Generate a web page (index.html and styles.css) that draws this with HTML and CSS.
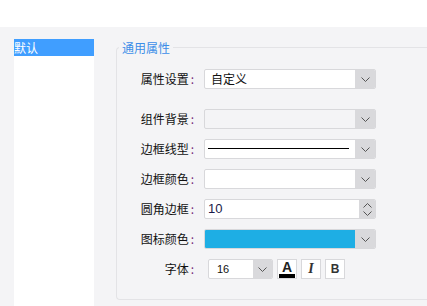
FILE: index.html
```html
<!DOCTYPE html>
<html lang="zh-CN">
<head>
  <meta charset="UTF-8">
  <title>通用属性</title>
  <link rel="stylesheet" href="styles.css">
</head>
<body>
  <div class="top"></div>
  <div class="main">
    <ul class="list">
      <li class="item active">默认</li>
    </ul>

    <fieldset class="props">
      <legend>通用属性</legend>

      <div class="row row-first">
        <div class="label">属性设置<span class="colon">:</span></div>
        <div class="select">
          <div class="value">自定义</div>
          <div class="arrow"><svg width="9" height="5" viewBox="0 0 9 5"><path d="M0.5 0.5 L4.5 4.5 L8.5 0.5" fill="none" stroke="#555" stroke-width="1"/></svg></div>
        </div>
      </div>

      <div class="row">
        <div class="label">组件背景<span class="colon">:</span></div>
        <div class="select select-off">
          <div class="value"></div>
          <div class="arrow"><svg width="9" height="5" viewBox="0 0 9 5"><path d="M0.5 0.5 L4.5 4.5 L8.5 0.5" fill="none" stroke="#555" stroke-width="1"/></svg></div>
        </div>
      </div>

      <div class="row">
        <div class="label">边框线型<span class="colon">:</span></div>
        <div class="select">
          <div class="value"><div class="line"></div></div>
          <div class="arrow"><svg width="9" height="5" viewBox="0 0 9 5"><path d="M0.5 0.5 L4.5 4.5 L8.5 0.5" fill="none" stroke="#555" stroke-width="1"/></svg></div>
        </div>
      </div>

      <div class="row">
        <div class="label">边框颜色<span class="colon">:</span></div>
        <div class="select">
          <div class="value"></div>
          <div class="arrow"><svg width="9" height="5" viewBox="0 0 9 5"><path d="M0.5 0.5 L4.5 4.5 L8.5 0.5" fill="none" stroke="#555" stroke-width="1"/></svg></div>
        </div>
      </div>

      <div class="row">
        <div class="label">圆角边框<span class="colon">:</span></div>
        <div class="select number">
          <div class="value num">10</div>
          <div class="spin">
            <svg width="9" height="5" viewBox="0 0 9 5"><path d="M0.5 4.5 L4.5 0.5 L8.5 4.5" fill="none" stroke="#555" stroke-width="1"/></svg>
            <svg width="9" height="5" viewBox="0 0 9 5"><path d="M0.5 0.5 L4.5 4.5 L8.5 0.5" fill="none" stroke="#555" stroke-width="1"/></svg>
          </div>
        </div>
      </div>

      <div class="row">
        <div class="label">图标颜色<span class="colon">:</span></div>
        <div class="select">
          <div class="value"><div class="swatch"></div></div>
          <div class="arrow"><svg width="9" height="5" viewBox="0 0 9 5"><path d="M0.5 0.5 L4.5 4.5 L8.5 0.5" fill="none" stroke="#555" stroke-width="1"/></svg></div>
        </div>
      </div>

      <div class="row row-font">
        <div class="label">字体<span class="colon">:</span></div>
        <div class="select select-small">
          <div class="value small">16</div>
          <div class="arrow"><svg width="9" height="5" viewBox="0 0 9 5"><path d="M0.5 0.5 L4.5 4.5 L8.5 0.5" fill="none" stroke="#555" stroke-width="1"/></svg></div>
        </div>
        <div class="btn btn-color"><span class="glyph-a">A</span><span class="bar"></span></div>
        <div class="btn btn-italic">I</div>
        <div class="btn btn-bold">B</div>
      </div>
    </fieldset>
  </div>
</body>
</html>
```

FILE: styles.css
```css
body {
  margin: 0;
  font-family: "Noto Sans CJK SC", "Liberation Sans", sans-serif;
  font-size: 12px;
  color: #111;
  overflow: hidden;
  background-color: #fff;
}

.top {
  height: 27px;
}

.main {
  display: flex;
  align-items: flex-start;
  background-color: #f4f4f6;
  height: 279px;
  padding-left: 14px;
}

.list {
  list-style: none;
  margin: 12px 0 0 0;
  padding: 0;
  width: 80px;
  flex-shrink: 0;
  height: 267px;
  background-color: #fff;
}

.item {
  height: 17px;
  line-height: 17px;
  color: #333;
}

.item.active {
  background-color: #409eff;
  color: #fff;
}

.props {
  flex: 1;
  min-width: 0;
  margin: 12px 0 0 22px;
  padding: 13px 0 20px 0;
  border: 1px solid #e3e3e6;
  border-right: 0;
  border-radius: 4px 0 0 4px;
}

.props legend {
  margin-left: 2px;
  padding: 0 3px;
  line-height: 17px;
  color: #3c8ee8;
  font-size: 12px;
}

.row {
  display: flex;
  align-items: center;
  height: 20px;
  margin-bottom: 10px;
}

.row-first {
  margin-bottom: 20px;
}

.row-font {
  margin-bottom: 0;
}

.label {
  width: 77px;
  text-align: right;
  flex-shrink: 0;
  line-height: 20px;
}

.colon {
  color: #7a2a7a;
  margin-left: 2px;
}

.select {
  display: flex;
  margin-left: 10px;
  width: 172px;
  height: 20px;
  box-sizing: border-box;
  border: 1px solid #d8d8db;
  border-radius: 2px;
  background-color: #fff;
  overflow: hidden;
}

.select-off {
  background-color: #f4f4f6;
}

.value {
  flex: 1;
  line-height: 18px;
  padding-left: 6px;
}

.arrow {
  width: 20px;
  background-color: #d9d9dc;
  display: flex;
  align-items: center;
  justify-content: center;
}

.line {
  margin: 8px 6px 0 -3px;
  border-top: 1px solid #000;
}

.swatch {
  margin: 0 0 0 -6px;
  height: 18px;
  background-color: #1eaee4;
}

.num {
  padding-left: 3px;
  color: #1a1a4a;
  font-family: "Liberation Sans", sans-serif;
  font-size: 13px;
}

.spin {
  width: 16px;
  background-color: #d9d9dc;
  display: flex;
  flex-direction: column;
  align-items: center;
  justify-content: space-around;
  padding: 1px 0;
}

.row-font .select {
  margin-left: 14px;
}

.select-small {
  width: 65px;
}

.small {
  padding-left: 8px;
  font-family: "Liberation Sans", sans-serif;
  font-size: 11px;
}

.select-small .arrow {
  width: 19px;
}

.btn {
  width: 20px;
  height: 20px;
  box-sizing: border-box;
  margin-left: 4px;
  border: 1px solid #d8d8db;
  background-color: #fff;
  display: flex;
  flex-direction: column;
  align-items: center;
  justify-content: center;
  font-family: "Liberation Sans", sans-serif;
  font-weight: bold;
  font-size: 12px;
  color: #333;
}

.btn-color {
  justify-content: flex-start;
}

.glyph-a {
  line-height: 13px;
  margin-top: 1px;
  font-size: 14px;
  color: #222;
}

.bar {
  width: 16px;
  height: 4px;
  background-color: #000;
}

.btn-italic {
  font-family: "Liberation Serif", serif;
  font-style: italic;
  font-size: 14px;
}

.btn-bold {
  font-size: 12px;
}
```
